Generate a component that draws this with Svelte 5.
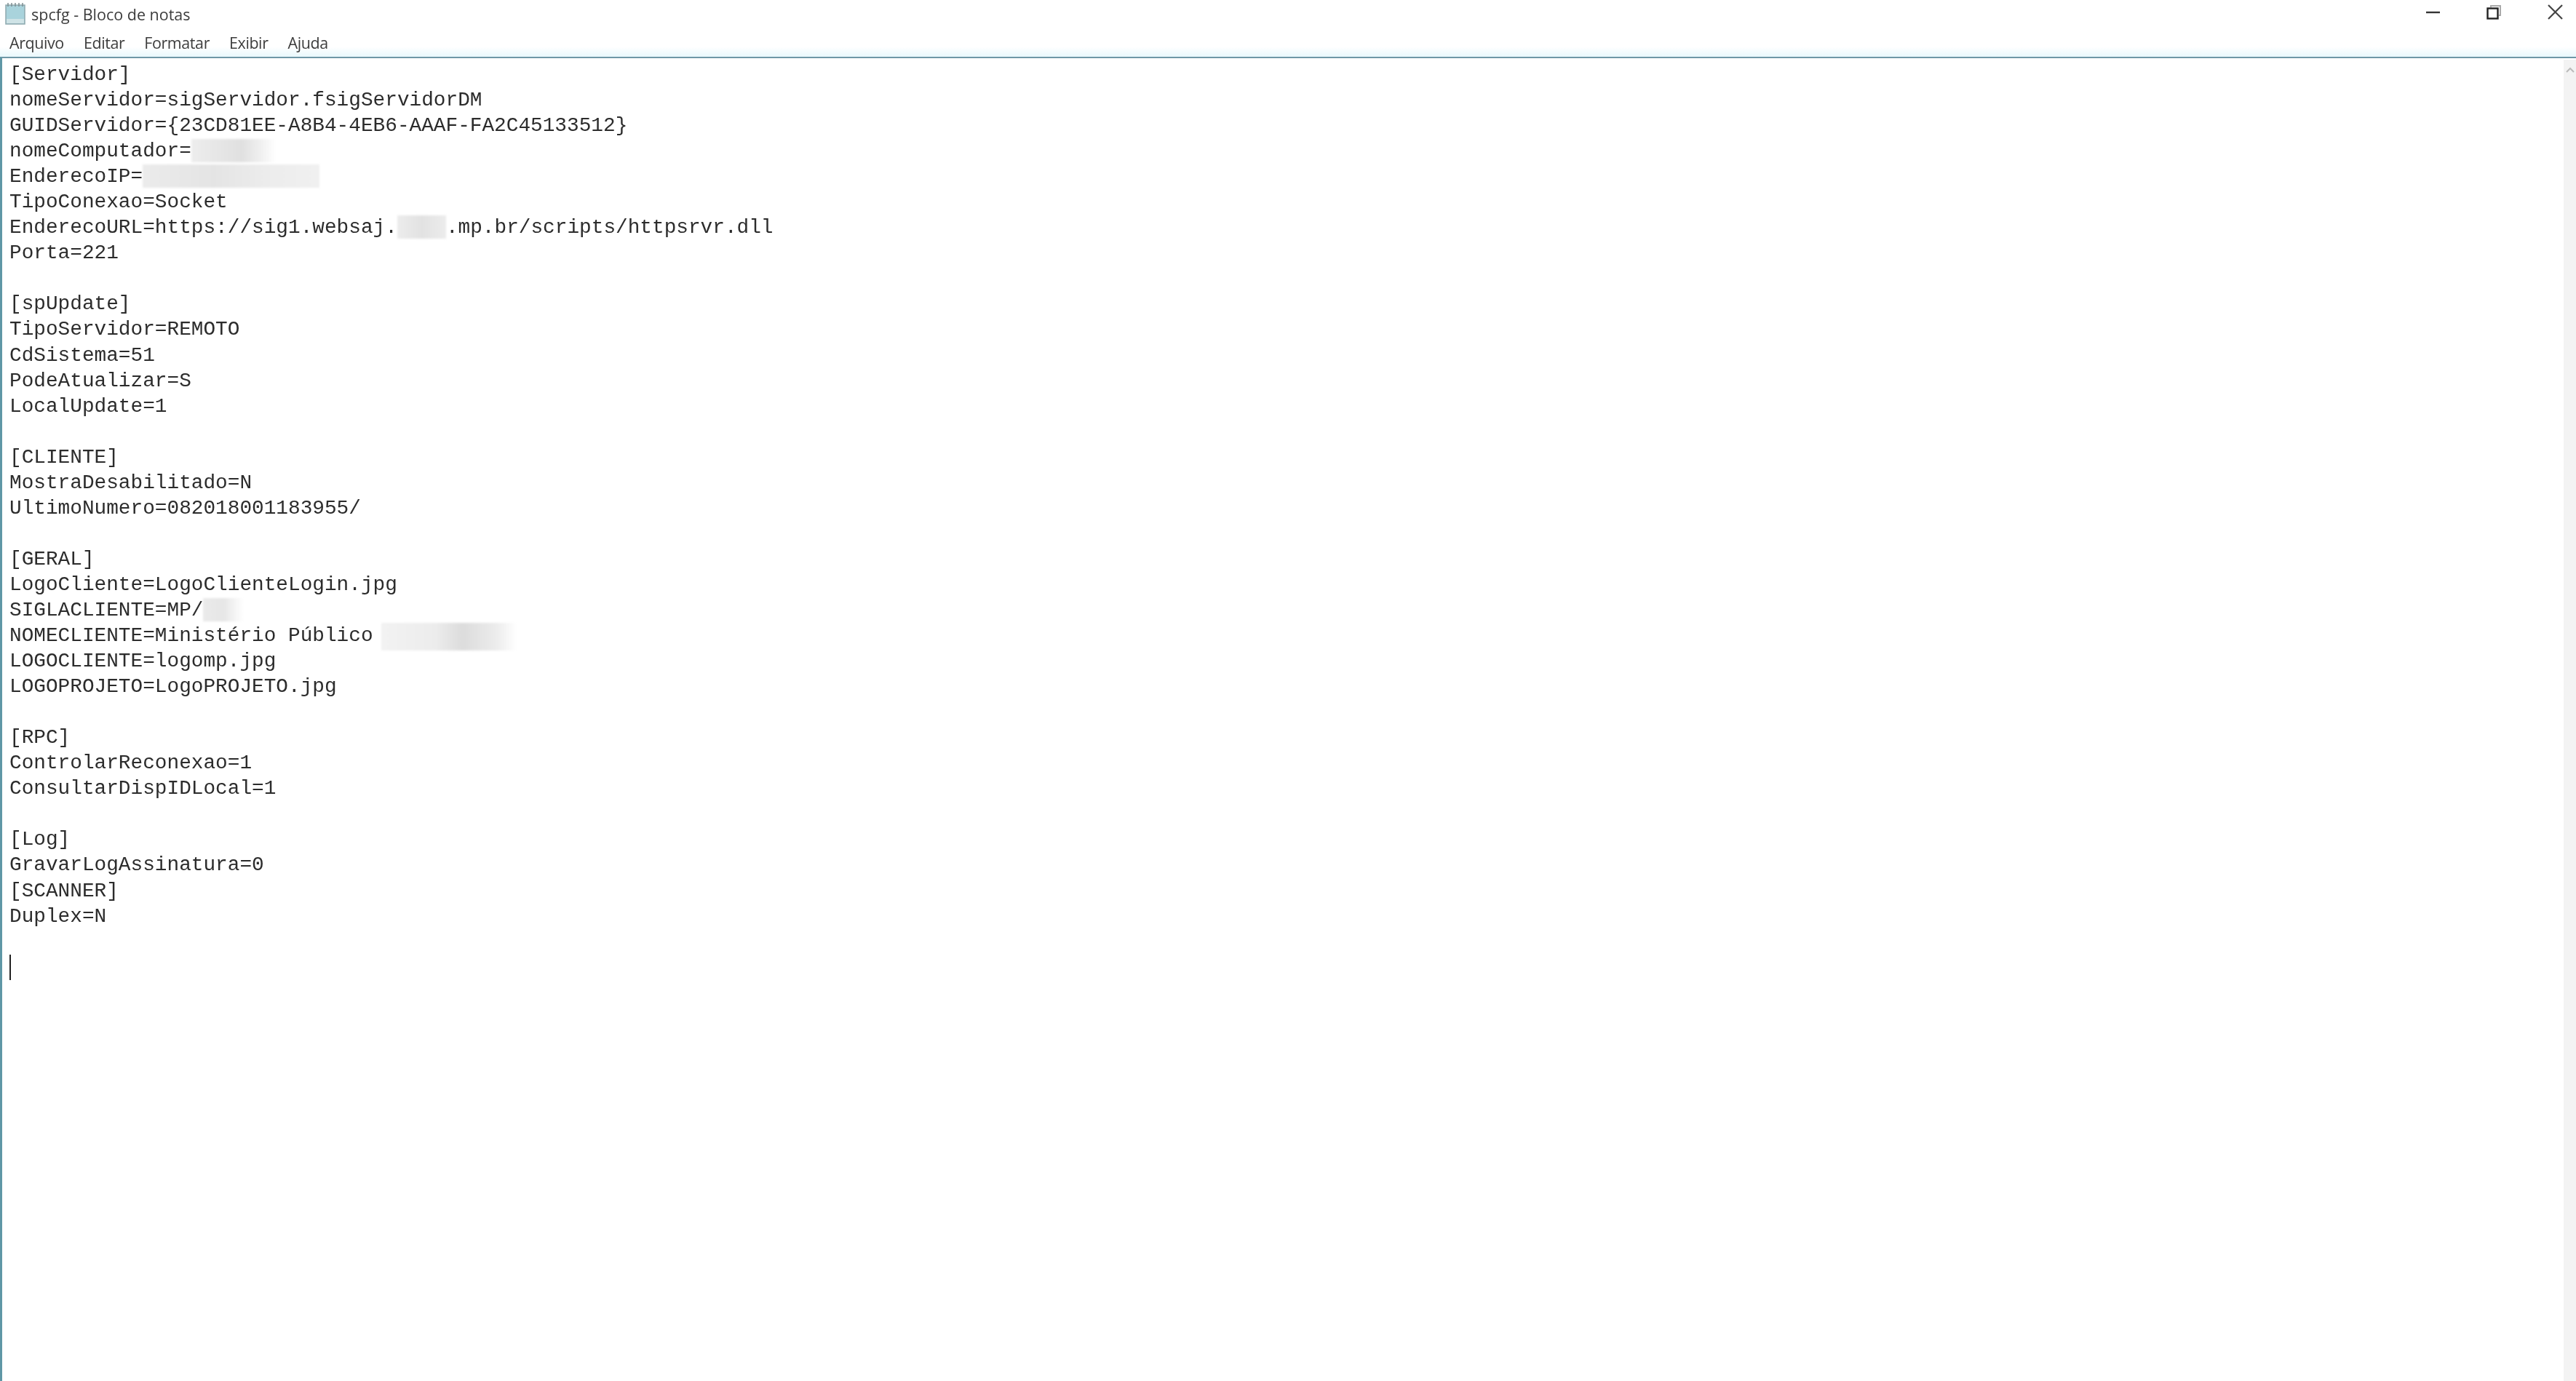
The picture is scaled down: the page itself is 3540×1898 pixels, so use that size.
<script>
  const lines = [
    ['[Servidor]'],
    ['nomeServidor=sigServidor.fsigServidorDM'],
    ['GUIDServidor={23CD81EE-A8B4-4EB6-AAAF-FA2C45133512}'],
    ['nomeComputador=', 'c1'],
    ['EnderecoIP=', 'c2'],
    ['TipoConexao=Socket'],
    ['EnderecoURL=https://sig1.websaj.', 'c3', '.mp.br/scripts/httpsrvr.dll'],
    ['Porta=221'],
    [''],
    ['[spUpdate]'],
    ['TipoServidor=REMOTO'],
    ['CdSistema=51'],
    ['PodeAtualizar=S'],
    ['LocalUpdate=1'],
    [''],
    ['[CLIENTE]'],
    ['MostraDesabilitado=N'],
    ['UltimoNumero=082018001183955/'],
    [''],
    ['[GERAL]'],
    ['LogoCliente=LogoClienteLogin.jpg'],
    ['SIGLACLIENTE=MP/', 'c4'],
    ['NOMECLIENTE=Ministério Público ', 'c5'],
    ['LOGOCLIENTE=logomp.jpg'],
    ['LOGOPROJETO=LogoPROJETO.jpg'],
    [''],
    ['[RPC]'],
    ['ControlarReconexao=1'],
    ['ConsultarDispIDLocal=1'],
    [''],
    ['[Log]'],
    ['GravarLogAssinatura=0'],
    ['[SCANNER]'],
    ['Duplex=N'],
    [''],
    ['|caret']
  ];
  const menus = ['Arquivo', 'Editar', 'Formatar', 'Exibir', 'Ajuda'];
</script>

<div class="win">
  <header class="title">
    <svg class="app" viewBox="0 0 28 30" width="28" height="30">
      <rect x="1" y="3" width="26" height="26" fill="#a9d3dc" stroke="#8fa9ae" stroke-width="1.5"/>
      <rect x="2" y="22" width="24" height="6" fill="#cfe3e6"/>
      <path d="M4 0v5M9 0v5M14 0v5M19 0v5M24 0v5" stroke="#7d8f93" stroke-width="1.5"/>
    </svg>
    <span class="name">spcfg - Bloco de notas</span>
    <div class="controls">
      <svg viewBox="0 0 19 4" width="19" height="4"><path d="M0 2h19" stroke="#333" stroke-width="2.4"/></svg>
      <svg viewBox="0 0 20 20" width="20" height="20"><path d="M6 3V1h13v13h-2" fill="none" stroke="#aaa" stroke-width="2"/><rect x="1.5" y="4.5" width="14" height="14" fill="#fff" stroke="#222" stroke-width="2.4"/></svg>
      <svg viewBox="0 0 21 21" width="21" height="21"><path d="M1 1l19 19M20 1L1 20" stroke="#444" stroke-width="2.2"/></svg>
    </div>
  </header>
  <nav class="menu">
    {#each menus as m}<span>{m}</span>{/each}
  </nav>
  <main class="text">
    {#each lines as l}
      <div class="line">
        {#if l[0] === '|caret'}
          <i class="caret"></i>
        {:else}
          {l[0]}{#if l[1]}<i class="smear {l[1]}"></i>{/if}{#if l[2]}{l[2]}{/if}
        {/if}
      </div>
    {/each}
    <div class="scroll">
      <svg viewBox="0 0 12 8" width="12" height="8"><path d="M1 7l5-5 5 5" fill="none" stroke="#bbb" stroke-width="2"/></svg>
    </div>
  </main>
</div>

<style>
  :global(body) { margin: 0; background: #fff; overflow: hidden; }
  .win { width: 3540px; height: 1898px; display: flex; flex-direction: column; overflow: hidden; background: #fff; }
  .title { height: 39px; flex: none; display: flex; align-items: center; padding-left: 7px; gap: 8px; font: 21.5px "Open Sans", sans-serif; color: #3c3c3c; filter: blur(0.6px); }
  .app { flex: none; margin-top: -1px; }
  .name { letter-spacing: 0; }
  .controls { margin-left: auto; display: flex; align-items: center; gap: 64px; padding-right: 18px; margin-top: -6px; }
  .menu { height: 39px; flex: none; display: flex; align-items: center; padding-left: 13px; gap: 27px; font: 21.5px "Open Sans", sans-serif; color: #3c3c3c; background: linear-gradient(#fff 65%, #e8f8fc); filter: blur(0.6px); letter-spacing: -0.42px; }
  .text { position: relative; flex: 1; border-top: 2px solid #6f97a6; border-left: 3px solid #5f97a6; padding: 5px 0 0 10px; font: 27.75px/35.05px "Liberation Mono", monospace; color: #2c2c2c; }
  .line { height: 35.05px; white-space: pre; filter: blur(0.7px); }
  .smear { display: inline-block; height: 32px; vertical-align: top; margin-top: 1px; filter: blur(1.5px); }
  .c1 { width: 116px; background: linear-gradient(90deg, #ededed, #e0e0e0 60%, #f2f2f2 85%, #fff); }
  .c2 { width: 243px; background: linear-gradient(90deg, #ebebeb, #e4e4e4 40%, #ececec 70%, #f0f0f0); }
  .c3 { width: 67px; background: linear-gradient(90deg, #ececec, #e2e2e2 50%, #ececec); }
  .c4 { width: 56px; background: linear-gradient(90deg, #eaeaea, #e6e6e6 50%, #fff); }
  .c5 { width: 186px; height: 38px; margin-left: -5px; margin-top: 0; background: linear-gradient(90deg, #f2f2f2, #ececec 40%, #dcdcdc 60%, #ececec 85%, #fff); }
  .caret { display: block; width: 2px; height: 35px; background: #222; }
  .scroll { position: absolute; right: 0; top: 2px; bottom: 0; width: 17px; background: #f3f3f3; display: flex; justify-content: center; padding-top: 10px; box-sizing: border-box; filter: blur(0.6px); }
  .scroll svg { flex: none; }
</style>
